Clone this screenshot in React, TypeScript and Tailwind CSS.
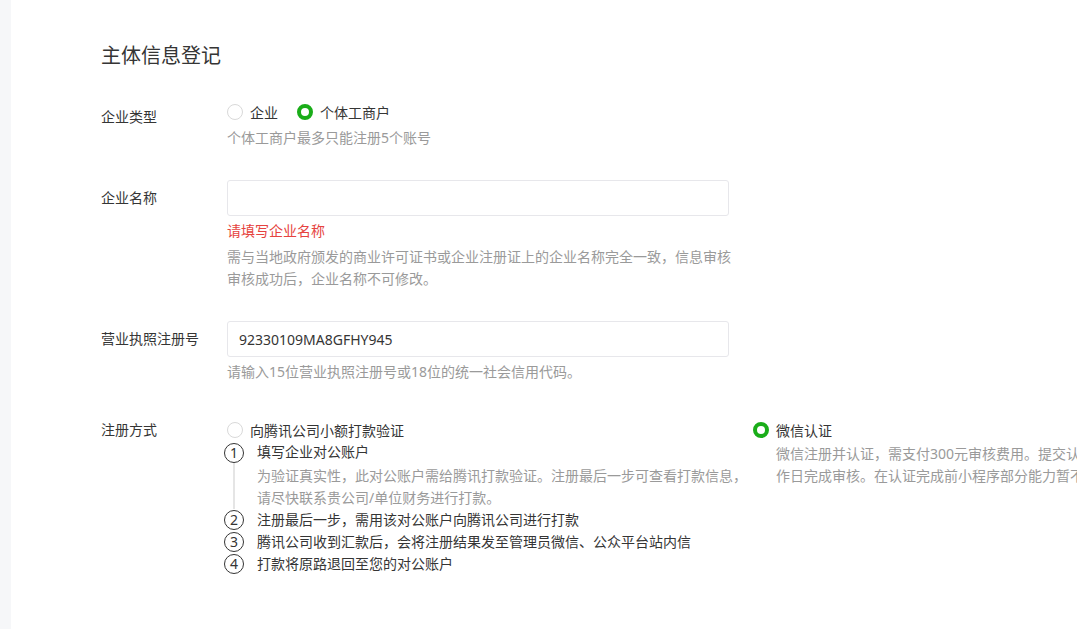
import React from "react";

const font = { fontFamily: '"Noto Sans", "Noto Sans CJK SC", sans-serif' };

function Radio({ checked }: { checked?: boolean }) {
  return checked ? (
    <span className="inline-block w-[16px] h-[16px] rounded-full border-[4px] border-[#1aad19] bg-white shrink-0" />
  ) : (
    <span className="inline-block w-[16px] h-[16px] rounded-full border border-[#d9d9d9] bg-white shrink-0" />
  );
}

function StepNum({ n }: { n: number }) {
  return (
    <span className="flex items-center justify-center w-[20px] h-[20px] rounded-full border border-[#353535] text-[14px] leading-none text-[#353535] shrink-0">
      {n}
    </span>
  );
}

export default function App() {
  return (
    <div className="flex w-[1077px] h-[629px] overflow-hidden bg-white text-[#353535]" style={font}>
      <div className="w-[11px] shrink-0 bg-[#f6f7f9]" />
      <div className="flex-1 pl-[90px] pt-[41px] min-w-0">
        <h1 className="text-[20px] leading-[30px] font-normal text-[#353535]">主体信息登记</h1>

        {/* Row 1 */}
        <div className="flex mt-[30px]">
          <div className="w-[126px] shrink-0 text-[14px] leading-[22px] pt-[5px]">企业类型</div>
          <div>
            <div className="flex items-center h-[22px] text-[14px]">
              <label className="flex items-center">
                <Radio />
                <span className="ml-[7px]">企业</span>
              </label>
              <label className="flex items-center ml-[19px]">
                <Radio checked />
                <span className="ml-[7px]">个体工商户</span>
              </label>
            </div>
            <div className="text-[14px] leading-[22px] text-[#9a9a9a] mt-[4px]">个体工商户最多只能注册5个账号</div>
          </div>
        </div>

        {/* Row 2 */}
        <div className="flex mt-[31px]">
          <div className="w-[126px] shrink-0 text-[14px] leading-[36px]">企业名称</div>
          <div>
            <div className="w-[502px] h-[36px] border border-[#e7e7eb] rounded-[3px] bg-white" />
            <div className="text-[14px] leading-[22px] text-[#e64340] mt-[4px]">请填写企业名称</div>
            <div className="text-[14px] leading-[22px] text-[#9a9a9a] mt-[4px] whitespace-nowrap">
              需与当地政府颁发的商业许可证书或企业注册证上的企业名称完全一致，信息审核
              <br />
              审核成功后，企业名称不可修改。
            </div>
          </div>
        </div>

        {/* Row 3 */}
        <div className="flex mt-[31px]">
          <div className="w-[126px] shrink-0 text-[14px] leading-[36px]">营业执照注册号</div>
          <div>
            <div className="w-[502px] h-[36px] border border-[#e7e7eb] rounded-[3px] bg-white px-[11px] flex items-center text-[14px]">
              92330109MA8GFHY945
            </div>
            <div className="text-[14px] leading-[22px] text-[#9a9a9a] mt-[4px]">请输入15位营业执照注册号或18位的统一社会信用代码。</div>
          </div>
        </div>

        {/* Row 4 */}
        <div className="flex mt-[36px]">
          <div className="w-[126px] shrink-0 text-[14px] leading-[22px]">注册方式</div>
          <div className="flex">
            <div className="w-[526px] shrink-0">
              <label className="flex items-center h-[22px] text-[14px]">
                <Radio />
                <span className="ml-[7px]">向腾讯公司小额打款验证</span>
              </label>
              <div className="-ml-[3px] text-[14px] leading-[22px]">
                <div className="flex">
                  <div className="flex flex-col items-center w-[20px]">
                    <div className="mt-[2px]"><StepNum n={1} /></div>
                    <div className="flex-1 w-[2px] bg-[#e5e5e5]" />
                  </div>
                  <div className="ml-[13px]">
                    <div>填写企业对公账户</div>
                    <div className="text-[#9a9a9a] whitespace-nowrap mt-[2px]">
                      为验证真实性，此对公账户需给腾讯打款验证。注册最后一步可查看打款信息，
                      <br />
                      请尽快联系贵公司/单位财务进行打款。
                    </div>
                  </div>
                </div>
                <div className="flex items-center h-[22px]">
                  <StepNum n={2} />
                  <span className="ml-[13px]">注册最后一步，需用该对公账户向腾讯公司进行打款</span>
                </div>
                <div className="flex items-center h-[22px]">
                  <StepNum n={3} />
                  <span className="ml-[13px]">腾讯公司收到汇款后，会将注册结果发至管理员微信、公众平台站内信</span>
                </div>
                <div className="flex items-center h-[22px]">
                  <StepNum n={4} />
                  <span className="ml-[13px]">打款将原路退回至您的对公账户</span>
                </div>
              </div>
            </div>
            <div className="shrink-0">
              <label className="flex items-center h-[22px] text-[14px]">
                <Radio checked />
                <span className="ml-[7px]">微信认证</span>
              </label>
              <div className="ml-[23px] mt-[2px] text-[14px] leading-[22px] text-[#9a9a9a] whitespace-nowrap">
                微信注册并认证，需支付300元审核费用。提交认证资料后，将在1-5个工
                <br />
                作日完成审核。在认证完成前小程序部分能力暂不开放。
              </div>
            </div>
          </div>
        </div>
      </div>
    </div>
  );
}
